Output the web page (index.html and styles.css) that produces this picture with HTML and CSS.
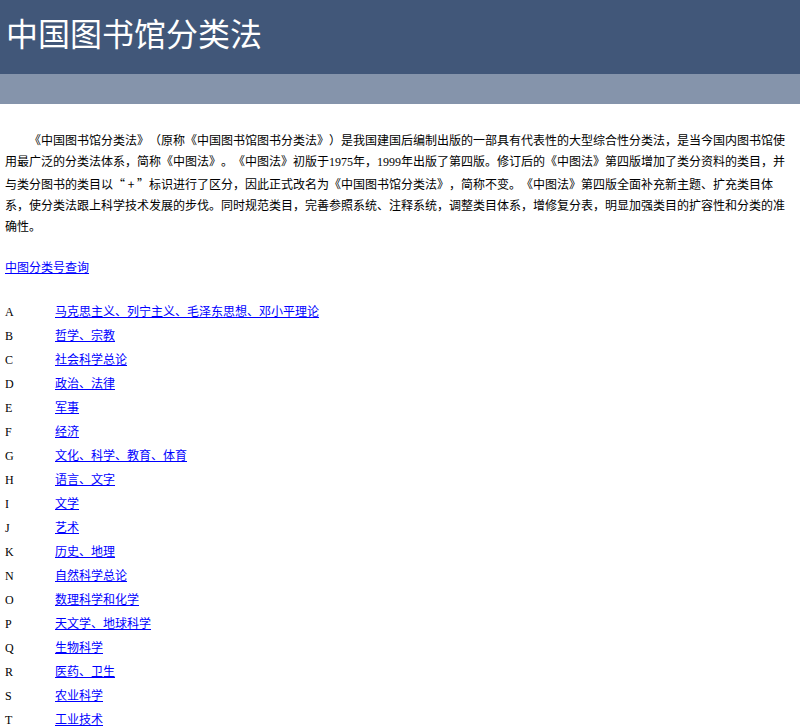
FILE: index.html
```html
<!DOCTYPE html>
<html lang="zh-CN">
<head>
    <meta charset="UTF-8">
    <title>中国图书馆分类法</title>
    <link rel="stylesheet" href="styles.css">
</head>
<body>
    <div class="header">
        <h1>中国图书馆分类法</h1>
    </div>
    <div class="subbar"></div>

    <div class="content">
        <p class="intro">《中国图书馆分类法》（原称《中国图书馆图书分类法》）是我国建国后编制出版的一部具有代表性的大型综合性分类法，是当今国内图书馆使用最广泛的分类法体系，简称《中图法》。《中图法》初版于1975年，1999年出版了第四版。修订后的《中图法》第四版增加了类分资料的类目，并与类分图书的类目以<span class="cjk">“ + ”</span>标识进行了区分，因此正式改名为《中国图书馆分类法》，简称不变。《中图法》第四版全面补充新主题、扩充类目体系，使分类法跟上科学技术发展的步伐。同时规范类目，完善参照系统、注释系统，调整类目体系，增修复分表，明显加强类目的扩容性和分类的准确性。</p>

        <p class="search"><a href="#">中图分类号查询</a></p>

        <table class="classes">
            <tr><td class="code">A</td><td><a href="#">马克思主义、列宁主义、毛泽东思想、邓小平理论</a></td></tr>
            <tr><td class="code">B</td><td><a href="#">哲学、宗教</a></td></tr>
            <tr><td class="code">C</td><td><a href="#">社会科学总论</a></td></tr>
            <tr><td class="code">D</td><td><a href="#">政治、法律</a></td></tr>
            <tr><td class="code">E</td><td><a href="#">军事</a></td></tr>
            <tr><td class="code">F</td><td><a href="#">经济</a></td></tr>
            <tr><td class="code">G</td><td><a href="#">文化、科学、教育、体育</a></td></tr>
            <tr><td class="code">H</td><td><a href="#">语言、文字</a></td></tr>
            <tr><td class="code">I</td><td><a href="#">文学</a></td></tr>
            <tr><td class="code">J</td><td><a href="#">艺术</a></td></tr>
            <tr><td class="code">K</td><td><a href="#">历史、地理</a></td></tr>
            <tr><td class="code">N</td><td><a href="#">自然科学总论</a></td></tr>
            <tr><td class="code">O</td><td><a href="#">数理科学和化学</a></td></tr>
            <tr><td class="code">P</td><td><a href="#">天文学、地球科学</a></td></tr>
            <tr><td class="code">Q</td><td><a href="#">生物科学</a></td></tr>
            <tr><td class="code">R</td><td><a href="#">医药、卫生</a></td></tr>
            <tr><td class="code">S</td><td><a href="#">农业科学</a></td></tr>
            <tr><td class="code">T</td><td><a href="#">工业技术</a></td></tr>
            <tr><td class="code">U</td><td><a href="#">交通运输</a></td></tr>
            <tr><td class="code">V</td><td><a href="#">航空、航天</a></td></tr>
            <tr><td class="code">X</td><td><a href="#">环境科学、安全科学</a></td></tr>
            <tr><td class="code">Z</td><td><a href="#">综合性图书</a></td></tr>
        </table>
    </div>
</body>
</html>
```

FILE: styles.css
```css
body {
    margin: 0;
    padding: 0;
    font-family: "Liberation Serif", "Noto Sans CJK SC", serif;
    font-size: 12px;
    color: #000;
    background: #fff;
    text-spacing-trim: space-all;
}
.header {
    background: #415779;
    height: 74px;
    box-sizing: border-box;
    padding: 16px 0 0 6px;
}
.header h1 {
    margin: 0;
    font-family: "Noto Sans CJK SC", sans-serif;
    font-weight: normal;
    font-size: 32px;
    line-height: 32px;
    color: #fff;
}
.subbar {
    background: #8594ab;
    height: 30px;
}
.content {
    padding: 0 5px;
}
.intro {
    margin: 27px 0 0;
    text-indent: 24px;
    line-height: 21px;
}
.cjk {
    font-family: "Noto Sans CJK SC", sans-serif;
}
.search {
    margin: 20px 0 0;
    line-height: 21px;
}
a {
    color: #0000ff;
}
.classes {
    margin-top: 21px;
    border-collapse: collapse;
}
.classes td {
    padding: 0;
    height: 24px;
    line-height: 24px;
    vertical-align: middle;
}
.classes .code {
    width: 50px;
}
```
